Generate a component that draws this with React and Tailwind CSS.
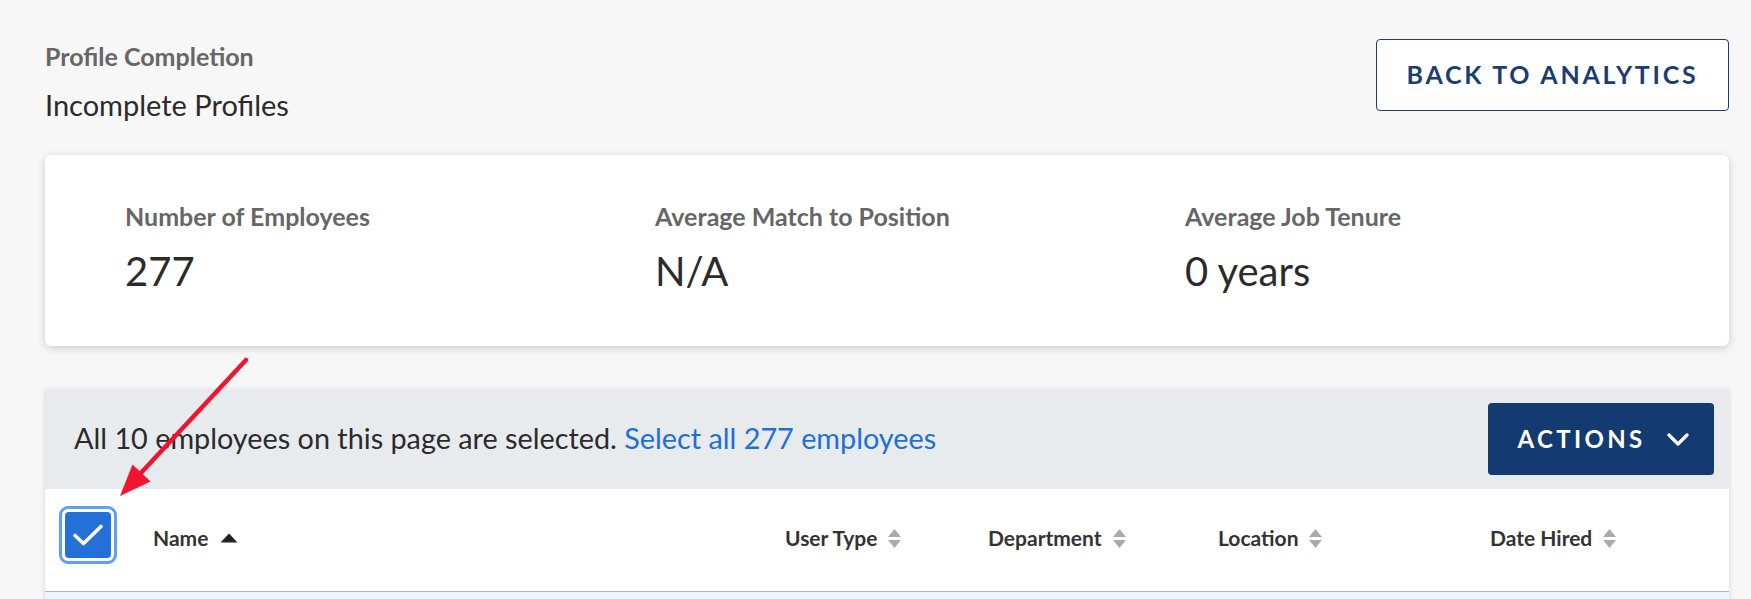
import React from "react";

const SortIcon = () => (
  <svg width="15" height="23" viewBox="0 0 15 23" className="ml-[10px]">
    <path d="M7.5 2 L14 10 H1 Z" fill="#aaaaaa" />
    <path d="M1 13 H14 L7.5 21 Z" fill="#aaaaaa" />
  </svg>
);

const HeaderCell = ({ label, sortable = true }) => (
  <div className="flex items-center text-[21px] font-bold text-[#333]">
    <span>{label}</span>
    {sortable && <SortIcon />}
  </div>
);

const stats = [
  { label: "Number of Employees", value: "277" },
  { label: "Average Match to Position", value: "N/A" },
  { label: "Average Job Tenure", value: "0 years" },
];

export default function App() {
  return (
    <div className="relative min-h-[599px] bg-[#f7f7f7] pl-[45px] pr-[22px] pt-[39px] font-['Lato',sans-serif] overflow-hidden">
      {/* page header */}
      <div className="flex items-start justify-between">
        <div className="pt-[2px]">
          <p className="text-[25px] leading-[30px] font-bold text-[#666]">Profile Completion</p>
          <h1 className="mt-[16px] text-[29px] leading-[36px] text-[#2b2b2b]">Incomplete Profiles</h1>
        </div>
        <button className="h-[72px] w-[353px] rounded-[4px] border border-[#1b3d73] bg-white text-[25px] font-bold tracking-[0.11em] text-[#1b3d73]">
          BACK TO ANALYTICS
        </button>
      </div>

      {/* stats card */}
      <div className="mt-[32px] grid grid-cols-3 rounded-[6px] bg-white pl-[80px] pr-[14px] pt-[46px] pb-[51px] shadow-[0_2px_8px_rgba(0,0,0,0.18)]">
        {stats.map((s) => (
          <div key={s.label}>
            <p className="text-[25px] leading-[30px] font-bold text-[#666]">{s.label}</p>
            <p className="mt-[16px] text-[40px] leading-[48px] text-[#2b2b2b]">{s.value}</p>
          </div>
        ))}
      </div>

      {/* table */}
      <div className="mt-[43px] bg-white shadow-[0_1px_5px_rgba(0,0,0,0.15)]">
        <div className="flex h-[100px] items-center justify-between bg-[#e8ebee] pl-[29px] pr-[15px]">
          <p className="text-[28.8px] text-[#2b2b2b]">
            All 10 employees on this page are selected.{" "}
            <a className="text-[#1f6fd6]">Select all 277 employees</a>
          </p>
          <button className="flex h-[72px] w-[226px] items-center justify-center gap-[21px] rounded-[4px] bg-[#143a72] pl-[4px] text-[24px] font-bold tracking-[0.14em] text-white">
            ACTIONS
            <svg width="22" height="13" viewBox="0 0 22 13" fill="none">
              <path d="M2 2 L11 11 L20 2" stroke="white" strokeWidth="3.2" strokeLinecap="round" strokeLinejoin="round" />
            </svg>
          </button>
        </div>
        <div className="grid h-[103px] grid-cols-[108px_632px_203px_230px_272px_1fr] items-center border-b border-[#b5b5b5] pb-[4px]">
          <div className="pl-[14px]">
            <div className="mb-[6px] h-[58px] w-[58px] rounded-[9px] border-[3px] border-[#5da0f5] bg-white p-[3px]">
              <div className="flex h-full w-full items-center justify-center rounded-[4px] bg-[#2370d9]">
                <svg width="32" height="24" viewBox="0 0 32 24" fill="none">
                  <path d="M3 12.5 L11.5 20.5 L29 3.5" stroke="white" strokeWidth="3.6" strokeLinecap="round" strokeLinejoin="round" />
                </svg>
              </div>
            </div>
          </div>
          <div className="flex items-center text-[21px] font-bold text-[#333]">
            <span>Name</span>
            <svg width="18" height="10" viewBox="0 0 18 10" className="ml-[12px]">
              <path d="M9 0.5 L17.5 9.5 H0.5 Z" fill="#222" />
            </svg>
          </div>
          <HeaderCell label="User Type" />
          <HeaderCell label="Department" />
          <HeaderCell label="Location" />
          <HeaderCell label="Date Hired" />
        </div>
        <div className="h-[20px] bg-[#eef4fd]" />
      </div>

      {/* annotation arrow */}
      <svg className="absolute left-[100px] top-[350px]" width="160" height="160" viewBox="0 0 160 160">
        <line x1="146" y1="10" x2="40" y2="124" stroke="#f0142e" strokeWidth="4.5" strokeLinecap="round" />
        <path d="M20 146 L50.5 131.5 L32.5 114.5 Z" fill="#f0142e" />
      </svg>
    </div>
  );
}
